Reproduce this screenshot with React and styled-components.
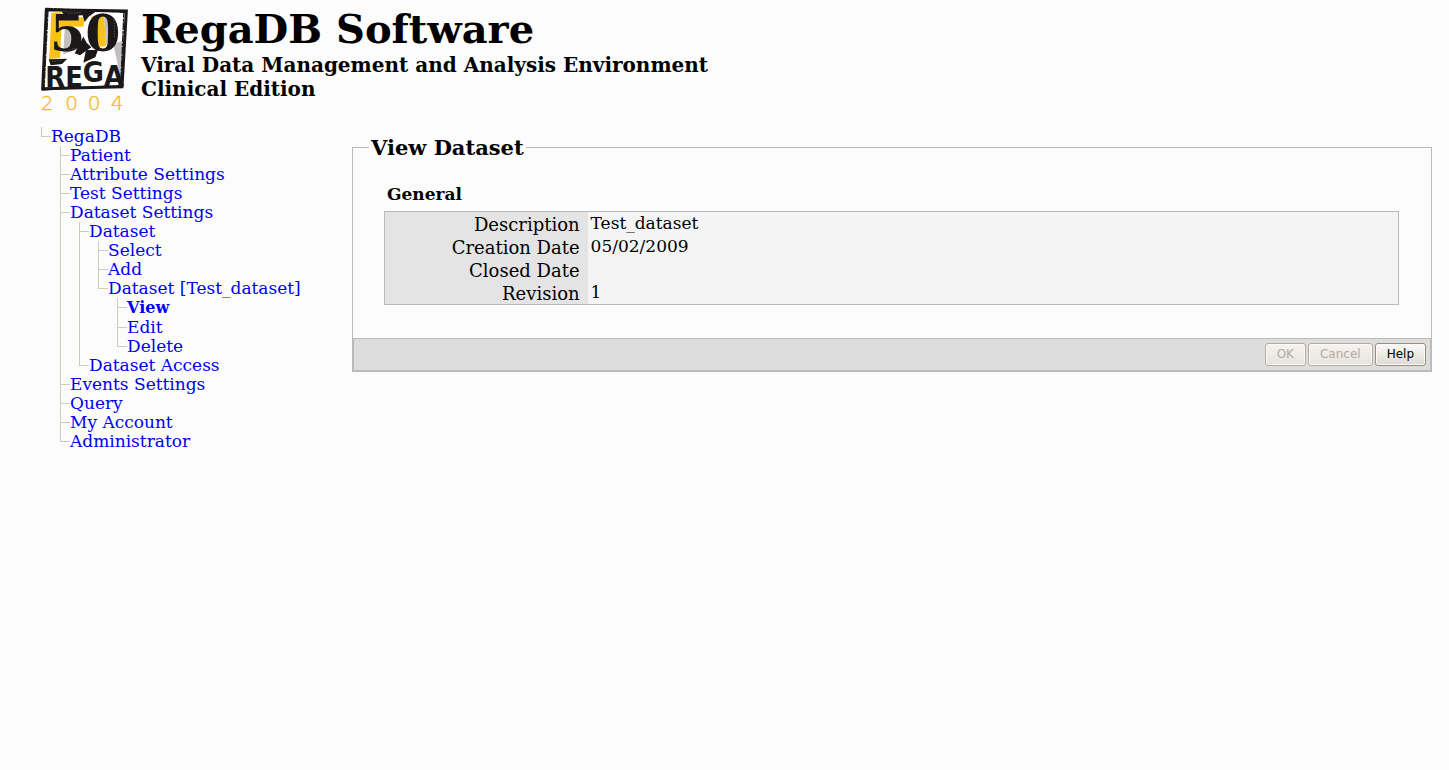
import React from "react";
import styled, { createGlobalStyle, css } from "styled-components";

const GlobalStyle = createGlobalStyle`
  *, *::before, *::after { box-sizing: border-box; }
  body {
    margin: 0;
    background: #fcfcfc;
    color: #000;
    font: 17px/19px "DejaVu Serif", serif;
  }
`;

const Page = styled.div`
  padding: 5px 17px 40px 40px;
`;

const Header = styled.header`
  display: flex;
  gap: 13px;
  height: 122px;
`;

const Logo = styled.svg`
  flex: none;
  width: 88px;
  height: 112px;
  overflow: visible;
`;

const Title = styled.h1`
  margin: 0;
  font-size: 40px;
  line-height: 48px;
`;

const Subtitle = styled.p`
  margin: 0;
  font-size: 20px;
  line-height: 24px;
  font-weight: bold;
`;

const Columns = styled.div`
  display: flex;
  align-items: flex-start;
`;

const Sidebar = styled.nav`
  flex: none;
  width: 312px;
  padding-left: 1px;
`;

const Branch = styled.ul`
  margin: 0;
  padding: 0 0 0 ${(p) => (p.$nested ? 9 : 0)}px;
  list-style: none;
`;

const line = "linear-gradient(#cfcbbb, #cfcbbb)";

const Node = styled.li`
  padding-left: 10px;
  background-image: ${line}, ${line};
  background-repeat: no-repeat;
  background-position: 0 0, 0 9px;
  background-size: 1px 100%, 10px 1px;
  &:last-child { background-size: 1px 9px, 10px 1px; }
`;

const NodeLink = styled.a`
  display: block;
  height: 19px;
  white-space: nowrap;
  color: #0000ee;
  text-decoration: none;
  ${(p) => p.$current && css`
    height: 20px;
    font-size: 16px;
    line-height: 20px;
    font-weight: bold;
  `}
`;

const Main = styled.main`
  flex: 1;
  min-width: 0;
  padding-top: 8px;
`;

const Form = styled.fieldset`
  margin: 0;
  padding: 0;
  min-width: 0;
  border: 1px solid #bbb;
`;

const Legend = styled.legend`
  margin-left: 16px;
  padding: 2px 2px 0;
  font-size: 21px;
  line-height: 22px;
  font-weight: bold;
`;

const Group = styled.section`
  padding: 24px 32px 33px 31px;
`;

const GroupTitle = styled.h2`
  margin: 0 0 6px;
  padding-left: 3px;
  font-size: 17px;
  line-height: 22px;
`;

const Details = styled.table`
  width: 100%;
  border: 1px solid #bbb;
  border-spacing: 0;
  table-layout: fixed;
  background: #f4f4f4;
`;

const Label = styled.th`
  width: 20%;
  height: 23px;
  padding: 2px 8px 0 0;
  background: #e4e4e4;
  text-align: right;
  font-size: 18px;
  line-height: 21px;
  font-weight: normal;
`;

const Value = styled.td`
  padding: 0 3px;
  line-height: 23px;
`;

const Actions = styled.div`
  display: flex;
  justify-content: flex-end;
  gap: 2px;
  padding: 4px;
  border: 1px solid #bbb;
  background: #ddd;
`;

const Button = styled.button`
  height: 23px;
  padding: 0 10px;
  border: 1px solid #998d80;
  border-radius: 3px;
  background: linear-gradient(#fbfaf9, #ded9d3);
  box-shadow: inset 0 0 0 1px #fbfaf8;
  color: #000;
  font: 12px/21px "DejaVu Sans", sans-serif;
  padding: 0 11px;
  &:disabled {
    border-color: #b9ab9c;
    background: linear-gradient(#f5f3f1, #e7e2dc);
    color: #b3aa9e;
  }
`;

const tree = [
  { label: "RegaDB", children: [
    { label: "Patient" },
    { label: "Attribute Settings" },
    { label: "Test Settings" },
    { label: "Dataset Settings", children: [
      { label: "Dataset", children: [
        { label: "Select" },
        { label: "Add" },
        { label: "Dataset [Test_dataset]", children: [
          { label: "View", current: true },
          { label: "Edit" },
          { label: "Delete" },
        ] },
      ] },
      { label: "Dataset Access" },
    ] },
    { label: "Events Settings" },
    { label: "Query" },
    { label: "My Account" },
    { label: "Administrator" },
  ] },
];

const details = [
  ["Description", "Test_dataset"],
  ["Creation Date", "05/02/2009"],
  ["Closed Date", ""],
  ["Revision", "1"],
];

function Tree({ nodes, nested }) {
  return (
    <Branch $nested={nested}>
      {nodes.map((n) => (
        <Node key={n.label}>
          <NodeLink href="#" $current={n.current} aria-current={n.current ? "page" : undefined}>
            {n.label}
          </NodeLink>
          {n.children && <Tree nodes={n.children} nested />}
        </Node>
      ))}
    </Branch>
  );
}

function RegaLogo() {
  return (
    <Logo viewBox="30 15 264 336" role="img" aria-label="50 Rega 2004">
      <path d="M47 24 L292 27 L280 264 L36 270 Z" fill="#fff" />
      {/* colour fields behind the lettering */}
      <path d="M64 38 L94 36 L96 60 L90 174 L58 176 Z" fill="#f9c21a" />
      <path d="M84 52 H164 L160 80 H90 Z" fill="#f9c21a" />
      <path d="M60 150 L92 140 L90 174 L58 176 Z" fill="#f9c21a" />
      <path d="M104 84 L130 80 L130 150 L100 164 Z" fill="#c4c0c0" />
      <path d="M184 50 L222 38 L228 138 L206 140 L188 112 Z" fill="#f9c21a" />
      <path d="M222 42 L236 62 L238 110 L228 138 Z" fill="#c4c0c0" />
      <path d="M250 132 L278 122 L273 240 Z" fill="#c4c0c0" />
      {/* black wedges */}
      <path d="M94 34 L200 33 L176 50 L164 66 L158 46 L104 48 Z" fill="#1c1819" />
      <path d="M160 110 L170 128 L184 142 L150 166 L134 160 Z" fill="#1c1819" />
      <path d="M56 178 L112 176 L96 192 L62 196 Z" fill="#1c1819" />
      <path d="M168 150 L204 150 L196 172 L160 188 Z" fill="#1c1819" />
      <text x="60" y="154" fontFamily="DejaVu Serif" fontWeight="bold" fontSize="152" fill="#1c1819">50</text>
      <text x="46" y="260" fontFamily="DejaVu Sans Condensed, DejaVu Sans" fontWeight="bold" fontSize="86" fill="#1c1819">
        R<tspan dy="0">E</tspan><tspan dy="-14">G</tspan><tspan dy="12">A</tspan>
      </text>
      <path d="M49 29 L289 33 L276 260 L38 266 Z" fill="none" stroke="#1c1819" strokeWidth="9" />
      <path d="M46 25 L290 37 M282 30 L272 262 M36 270 L280 256 M54 30 L42 268" fill="none" stroke="#1c1819" strokeWidth="4" strokeDasharray="23 3 9 2" />
      <path d="M116 40 L154 38 M118 150 L140 144 M252 60 L254 112 M66 184 L98 182" fill="none" stroke="#fff" strokeWidth="1" strokeDasharray="3 5" />
      <g fill="#f4b91c" stroke="#f4b91c" strokeWidth="1" fontFamily="DejaVu Sans" fontWeight="200" fontSize="60">
        <text x="32" y="329">2</text>
        <text x="106" y="329">0</text>
        <text x="173" y="329">0</text>
        <text x="242" y="329">4</text>
      </g>
    </Logo>
  );
}

export default function App() {
  return (
    <>
      <GlobalStyle />
      <Page>
        <Header>
          <RegaLogo />
          <div>
            <Title>RegaDB Software</Title>
            <Subtitle>Viral Data Management and Analysis Environment</Subtitle>
            <Subtitle>Clinical Edition</Subtitle>
          </div>
        </Header>
        <Columns>
          <Sidebar aria-label="Main menu">
            <Tree nodes={tree} />
          </Sidebar>
          <Main>
            <Form>
              <Legend>View Dataset</Legend>
              <Group>
                <GroupTitle>General</GroupTitle>
                <Details>
                  <tbody>
                    {details.map(([label, value]) => (
                      <tr key={label}>
                        <Label scope="row">{label}</Label>
                        <Value>{value}</Value>
                      </tr>
                    ))}
                  </tbody>
                </Details>
              </Group>
              <Actions>
                <Button type="button" disabled>OK</Button>
                <Button type="button" disabled>Cancel</Button>
                <Button type="button">Help</Button>
              </Actions>
            </Form>
          </Main>
        </Columns>
      </Page>
    </>
  );
}
